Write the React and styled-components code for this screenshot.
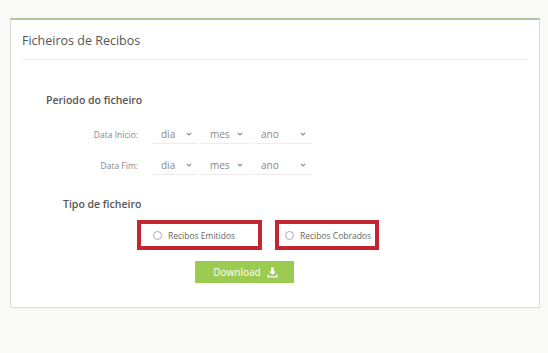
import styled, { createGlobalStyle } from "styled-components";

const GlobalStyle = createGlobalStyle`
    html, body {
        margin: 0;
        padding: 0;
        background: #f9f9f8;
        font-family: "Open Sans", "Noto Sans", sans-serif;
    }
`;

const dateRows = [
    { label: "Data Inicio:" },
    { label: "Data Fim:" },
];

const fileTypes = [
    { label: "Recibos Emitidos", width: 125, pad: 12 },
    { label: "Recibos Cobrados", width: 104, pad: 6 },
];

function Chevron() {
    return (
        <svg width="6" height="4" viewBox="0 0 6 4">
            <path d="M0.8 0.8 L3 3 L5.2 0.8" fill="none" stroke="#8a8a8a" strokeWidth="1.1" />
        </svg>
    );
}

function DownloadIcon() {
    return (
        <svg width="11" height="11" viewBox="0 0 11 11">
            <path d="M4 0.5 H7 V4.5 H9 L5.5 8 L2 4.5 H4 Z" fill="#fff" />
            <path d="M0.5 7.5 V10.5 H10.5 V7.5 H9.2 V9.2 H1.8 V7.5 Z" fill="#fff" />
        </svg>
    );
}

function DateSelect({ text, width }) {
    return (
        <SelectBox $width={width}>
            <span>{text}</span>
            <Chevron />
        </SelectBox>
    );
}

function App() {
    return (
        <>
            <GlobalStyle />
            <Page>
                <Card>
                    <CardHeader>Ficheiros de Recibos</CardHeader>
                    <CardBody>
                        <SectionTitle $indent={35} $top={0}>Periodo do ficheiro</SectionTitle>
                        <DateRows>
                            {dateRows.map(r => (
                                <DateRow key={r.label}>
                                    <RowLabel>{r.label}</RowLabel>
                                    <DateSelect text="dia" width={46} />
                                    <DateSelect text="mes" width={48} />
                                    <DateSelect text="ano" width={60} />
                                </DateRow>
                            ))}
                        </DateRows>
                        <SectionTitle $indent={52} $top={21}>Tipo de ficheiro</SectionTitle>
                        <RadioRow>
                            {fileTypes.map(t => (
                                <RadioBox key={t.label} $width={t.width} $pad={t.pad}>
                                    <RadioCircle />
                                    <span>{t.label}</span>
                                </RadioBox>
                            ))}
                        </RadioRow>
                        <DownloadButton>
                            Download
                            <DownloadIcon />
                        </DownloadButton>
                    </CardBody>
                </Card>
            </Page>
        </>
    );
}

export default App;

const Page = styled.div`
    width: 548px;
    height: 353px;
    padding: 18px 8px 0 10px;
    box-sizing: border-box;
`;

const Card = styled.div`
    width: 530px;
    height: 290px;
    box-sizing: border-box;
    background: #fff;
    border: 1px solid #dcdcdc;
    border-top: 2px solid #b3c59b;
`;

const CardHeader = styled.div`
    margin: 0 12px 0 11px;
    height: 40px;
    box-sizing: border-box;
    display: flex;
    align-items: center;
    border-bottom: 1px solid #eeeeee;
    font-size: 12.5px;
    color: #555;
    padding-top: 2px;
`;

const CardBody = styled.div`
    padding-top: 32px;
    display: flex;
    flex-direction: column;
`;

const SectionTitle = styled.div`
    margin: ${p => p.$top}px 0 0 ${p => p.$indent}px;
    font-size: 10.5px;
    font-weight: 600;
    color: #555;
    line-height: 16px;
`;

const DateRows = styled.div`
    margin-top: 16px;
    display: flex;
    flex-direction: column;
    gap: 11px;
`;

const DateRow = styled.div`
    display: flex;
    align-items: stretch;
    gap: 3px;
`;

const RowLabel = styled.div`
    width: 127px;
    margin-right: 11px;
    font-size: 8.5px;
    color: #888;
    display: flex;
    align-items: center;
    justify-content: flex-end;
`;

const SelectBox = styled.div`
    width: ${p => p.$width}px;
    height: 20px;
    box-sizing: border-box;
    border-bottom: 1px solid #ececec;
    display: flex;
    align-items: center;
    justify-content: space-between;
    padding: 0 6px 0 9px;
    font-size: 10px;
    color: #888;
`;

const RadioRow = styled.div`
    margin: 8px 0 0 126px;
    display: flex;
    gap: 13px;
`;

const RadioBox = styled.div`
    width: ${p => p.$width}px;
    height: 30px;
    box-sizing: border-box;
    border: 4px solid #c42631;
    display: flex;
    align-items: center;
    gap: 6px;
    padding-left: ${p => p.$pad}px;
    font-size: 8.5px;
    color: #666;
    white-space: nowrap;
`;

const RadioCircle = styled.span`
    flex: none;
    width: 7px;
    height: 7px;
    border-radius: 50%;
    border: 1px solid #aaa;
    background: #fff;
`;

const DownloadButton = styled.div`
    margin: 11px 0 0 184px;
    width: 99px;
    height: 22px;
    background: #9ccb52;
    color: #fff;
    font-size: 10px;
    display: flex;
    align-items: center;
    justify-content: center;
    gap: 6px;
    padding-left: 2px;
    box-sizing: border-box;
`;
